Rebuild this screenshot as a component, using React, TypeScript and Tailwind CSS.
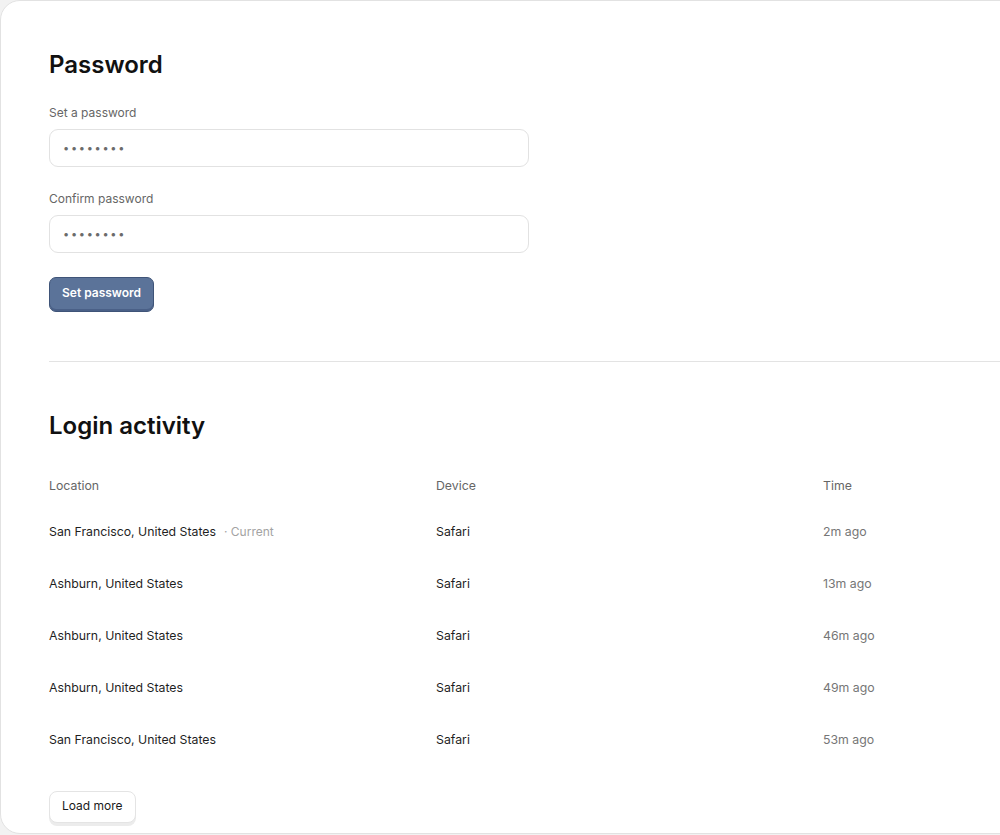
import React from "react";

const rows = [
  { loc: "San Francisco, United States", current: true, device: "Safari", time: "2m ago" },
  { loc: "Ashburn, United States", device: "Safari", time: "13m ago" },
  { loc: "Ashburn, United States", device: "Safari", time: "46m ago" },
  { loc: "Ashburn, United States", device: "Safari", time: "49m ago" },
  { loc: "San Francisco, United States", device: "Safari", time: "53m ago" },
];

function Field({ label, top }: { label: string; top: string }) {
  return (
    <div className={top}>
      <div className="text-[12px] leading-5 text-[#666]">{label}</div>
      <div className="mt-[6px] flex h-[38px] w-[480px] items-center rounded-[9px] border border-[#e2e2e2] bg-white px-[13px]">
        <span className="text-[11px] tracking-[1.7px] text-[#6b6b6b]">••••••••</span>
      </div>
    </div>
  );
}

export default function App() {
  return (
    <div
      className="h-[835px] w-[1000px] overflow-hidden bg-[#f2f2f2]"
      style={{ fontFamily: "Inter, 'Noto Sans', sans-serif" }}
    >
      <div className="h-[834px] w-[1400px] rounded-l-[20px] border border-[#e2e2e2] bg-white pl-[48px] pt-[48px]">
        <h1 className="text-[24px] font-semibold leading-8 text-[#111]">Password</h1>
        <Field label="Set a password" top="mt-[22px]" />
        <Field label="Confirm password" top="mt-[22px]" />
        <button className="mt-[24px] flex h-[35px] items-center rounded-[7px] border border-[#3f5478] bg-[#5b7399] px-[12px] pb-[3px] text-[12px] font-semibold text-white shadow-[inset_0_-2px_0_#4a6087]">
          Set password
        </button>
        <div className="mt-[49px] h-px w-[1300px] bg-[#e3e3e3]" />
        <h2 className="mt-[48px] text-[24px] font-semibold leading-8 text-[#111]">Login activity</h2>
        <div className="mt-[24px] w-[1161px] text-[12.3px]">
          <div className="grid h-[40px] grid-cols-3 items-center text-[#666]">
            <div>Location</div>
            <div>Device</div>
            <div>Time</div>
          </div>
          {rows.map((r, i) => (
            <div key={i} className="grid h-[52px] grid-cols-3 items-center">
              <div className="text-[#1f1f1f]">
                {r.loc}
                {r.current && (
                  <span className="ml-[8px] text-[12px] text-[#a3a3a3]">· Current</span>
                )}
              </div>
              <div className="text-[#1f1f1f]">{r.device}</div>
              <div className="text-[#767676]">{r.time}</div>
            </div>
          ))}
        </div>
        <button className="mt-[25px] flex h-[32px] items-center rounded-[8px] border border-[#e4e4e4] bg-white px-[12px] pb-[2px] text-[12px] font-normal text-[#1a1a1a] shadow-[0_3px_0_#ececec]">
          Load more
        </button>
      </div>
    </div>
  );
}
